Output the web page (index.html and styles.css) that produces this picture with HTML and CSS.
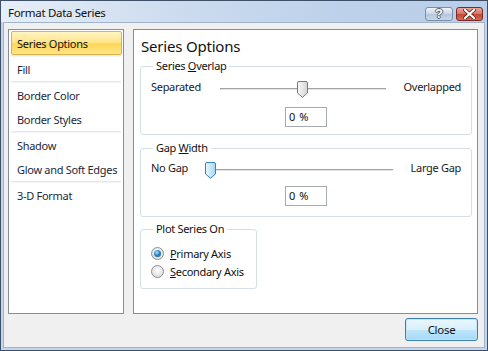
FILE: index.html
```html
<!DOCTYPE html>
<html>
<head>
<meta charset="utf-8">
<link rel="stylesheet" href="styles.css">
</head>
<body>
<div class="window">
  <div class="titlebar">
    <span class="title">Format Data Series</span>
    <div class="caption-buttons">
      <div class="cbtn help"><span>?</span></div>
      <div class="cbtn close">
        <svg width="13" height="10" viewBox="0 0 13 10"><path d="M2 1 L11 9 M11 1 L2 9" stroke="#5a1a14" stroke-width="3.6" stroke-linecap="square"/><path d="M2 1 L11 9 M11 1 L2 9" stroke="#fff" stroke-width="2.2" stroke-linecap="square"/></svg>
      </div>
    </div>
  </div>
  <div class="content">
    <div class="panels">
      <div class="nav">
        <div class="nav-item selected">Series Options</div>
        <div class="sep"></div>
        <div class="nav-item">Fill</div>
        <div class="sep"></div>
        <div class="nav-item">Border Color</div>
        <div class="nav-item">Border Styles</div>
        <div class="sep"></div>
        <div class="nav-item">Shadow</div>
        <div class="nav-item">Glow and Soft Edges</div>
        <div class="sep"></div>
        <div class="nav-item">3-D Format</div>
      </div>
      <div class="main">
        <h1 class="heading">Series Options</h1>
        <fieldset class="group wide g1">
          <legend>Series <u>O</u>verlap</legend>
          <div class="slider-row">
            <span class="lbl-left l1">Separated</span>
            <div class="slider s1">
              <div class="track"></div>
              <svg class="thumb" style="left:77px" width="11" height="17" viewBox="0 0 11 17"><defs><linearGradient id="tg" x1="0" y1="0" x2="1" y2="0"><stop offset="0" stop-color="#fafafa"/><stop offset="1" stop-color="#d4d4d4"/></linearGradient></defs><path d="M0.5 2 Q0.5 0.5 2 0.5 H9 Q10.5 0.5 10.5 2 V12 L5.5 16.3 L0.5 12 Z" fill="url(#tg)" stroke="#7a7a7a"/></svg>
            </div>
            <span class="lbl-right">Overlapped</span>
          </div>
          <div class="input-row"><div class="num">0 %</div></div>
        </fieldset>
        <fieldset class="group wide g2">
          <legend>Gap <u>W</u>idth</legend>
          <div class="slider-row">
            <span class="lbl-left l2">No Gap</span>
            <div class="slider s2">
              <div class="track"></div>
              <svg class="thumb" style="left:0px" width="11" height="17" viewBox="0 0 11 17"><defs><linearGradient id="tb" x1="0" y1="0" x2="1" y2="0"><stop offset="0" stop-color="#e9f7fe"/><stop offset="1" stop-color="#a6d8f4"/></linearGradient></defs><path d="M0.5 2 Q0.5 0.5 2 0.5 H9 Q10.5 0.5 10.5 2 V12 L5.5 16.3 L0.5 12 Z" fill="url(#tb)" stroke="#3c7fb1"/></svg>
            </div>
            <span class="lbl-right">Large Gap</span>
          </div>
          <div class="input-row"><div class="num">0 %</div></div>
        </fieldset>
        <fieldset class="group g3">
          <legend>Plot Series On</legend>
          <div class="radio-row">
            <span class="radio on"><span class="dot"></span></span>
            <span class="rlabel"><u>P</u>rimary Axis</span>
          </div>
          <div class="radio-row">
            <span class="radio"></span>
            <span class="rlabel"><u>S</u>econdary Axis</span>
          </div>
        </fieldset>
      </div>
    </div>
    <div class="footer">
      <div class="btn">Close</div>
    </div>
  </div>
</div>
</body>
</html>
```
FILE: styles.css
```css
* { box-sizing: border-box; }
html, body { margin: 0; padding: 0; }
body {
  width: 488px;
  height: 351px;
  overflow: hidden;
  font-family: "Noto Sans", "Open Sans", sans-serif;
  font-size: 11px;
  letter-spacing: -0.3px;
  color: #1a1a1a;
}
.window {
  width: 488px;
  height: 351px;
  border: 1px solid #3d5068;
  background: #c3d6ee;
  display: flex;
  flex-direction: column;
  padding: 0 2px 2px 2px;
}
.titlebar {
  height: 21px;
  display: flex;
  align-items: center;
  justify-content: space-between;
  margin: 0 -2px;
  padding: 0 4px 0 7px;
  background: linear-gradient(to right, #e7eef7 0%, #cddcef 35%, #bdd1ea 70%, #b9cee9 100%);
}
.title {
  font-size: 11.5px;
  color: #111;
  margin-top: 2px;
}
.caption-buttons {
  display: flex;
  gap: 3px;
  align-self: flex-start;
  margin-top: 6px;
}
.cbtn {
  height: 14px;
  border-radius: 3px;
  display: flex;
  align-items: center;
  justify-content: center;
}
.help {
  width: 28px;
  border: 1px solid #7a8ea8;
  background: linear-gradient(#eef3f9, #c8d6e7 50%, #b4c6dc 51%, #c9d8ea);
}
.help span {
  font-family: "Liberation Sans", sans-serif;
  font-weight: bold;
  font-size: 13px;
  line-height: 12px;
  letter-spacing: 0;
  color: #fff;
  text-shadow: 1px 0 0 #4d5d70, -1px 0 0 #4d5d70, 0 1px 0 #4d5d70, 0 -1px 0 #4d5d70;
}
.close {
  width: 27px;
  border: 1px solid #7a2a22;
  background: linear-gradient(#e7a79c, #d47466 50%, #c44534 51%, #d46a55);
}
.content {
  flex: 1;
  background: #f0f0f0;
  border: 1px solid #9fb3ca;
  display: flex;
  flex-direction: column;
  padding: 6px 4px 4px 4px;
}
.panels {
  display: flex;
  gap: 9px;
  height: 285px;
}
.nav {
  width: 116px;
  background: #fff;
  border: 1px solid #898c99;
  padding: 1px 1px 0 2px;
}
.nav-item {
  height: 24px;
  line-height: 21px;
  padding-top: 1px;
  padding-left: 5px;
  border: 1px solid transparent;
  border-radius: 2px;
  color: #1d2838;
  white-space: nowrap;
}
.nav-item.selected {
  background: linear-gradient(#fff4c2, #ffe68d 45%, #fdd75a 55%, #fde585);
  border-color: #dbb250;
  color: #111;
}
.sep {
  height: 2px;
  border-top: 1px solid #e6e8ec;
  border-bottom: 1px solid #f3f4f6;
  margin-right: 1px;
}
.main {
  width: 345px;
  background: #fff;
  border: 1px solid #898c99;
  padding: 5px 5px 0 6px;
}
.heading {
  margin: 0 0 2px 1px;
  font-size: 15px;
  font-weight: normal;
  line-height: 22px;
  letter-spacing: -0.2px;
  color: #111;
}
.group {
  margin: 0 0 6px 0;
  border: 1px solid #d5dfe5;
  border-radius: 3px;
  padding: 0 10px 7px 10px;
  min-width: 0;
}
.group legend {
  padding: 0 3px;
  margin-left: 2px;
  line-height: 14px;
  color: #111;
}
.wide { width: 332px; }
.g1 { padding-top: 3px; }
.g2 { padding-top: 2px; padding-bottom: 10px; margin-bottom: 5px; }
.g3 { width: 117px; padding: 8px 6px 8px 10px; }
.slider-row {
  display: flex;
  align-items: center;
  height: 20px;
}
.lbl-left { flex: none; }
.l1 { width: 69px; }
.l2 { width: 54px; }
.lbl-right { margin-left: auto; }
.slider {
  position: relative;
  height: 20px;
  flex: none;
}
.s1 { width: 166px; }
.s2 { width: 188px; }
.track {
  position: absolute;
  left: 0;
  right: 0;
  top: 12px;
  height: 2px;
  border-top: 1px solid #a2a2a2;
  border-bottom: 1px solid #e4e4e4;
}
.thumb {
  position: absolute;
  top: 5px;
}
.input-row {
  display: flex;
  justify-content: center;
  margin-top: 11px;
}
.g2 .input-row { margin-top: 9px; }
.num {
  width: 42px;
  height: 20px;
  border: 1px solid #a6abb3;
  background: #fff;
  line-height: 18px;
  padding-left: 3px;
  letter-spacing: 0;
  word-spacing: 1px;
  color: #111;
}
.radio-row {
  display: flex;
  align-items: center;
  height: 18px;
}
.radio {
  width: 13px;
  height: 13px;
  border-radius: 50%;
  border: 1px solid #8e8f8f;
  background: radial-gradient(circle at 50% 40%, #ffffff 0%, #e8e8e8 50%, #cfcfcf 100%);
  display: flex;
  align-items: center;
  justify-content: center;
  margin-right: 6px;
}
.radio .dot {
  width: 7px;
  height: 7px;
  border-radius: 50%;
  background: radial-gradient(circle at 40% 35%, #aee3fb 0%, #2f88c6 45%, #194e78 100%);
}
.rlabel { color: #111; }
.footer {
  display: flex;
  justify-content: flex-end;
  margin-top: 4px;
  padding-right: 2px;
}
.btn {
  width: 73px;
  height: 23px;
  border: 1px solid #3c7fb1;
  border-radius: 3px;
  background: linear-gradient(#eaf6fd, #d9f0fc 50%, #bee6fd 51%, #a7d9f5);
  box-shadow: inset 0 0 0 1px #c4e5f6;
  text-align: center;
  line-height: 21px;
  font-size: 11.5px;
  color: #111;
}
```
